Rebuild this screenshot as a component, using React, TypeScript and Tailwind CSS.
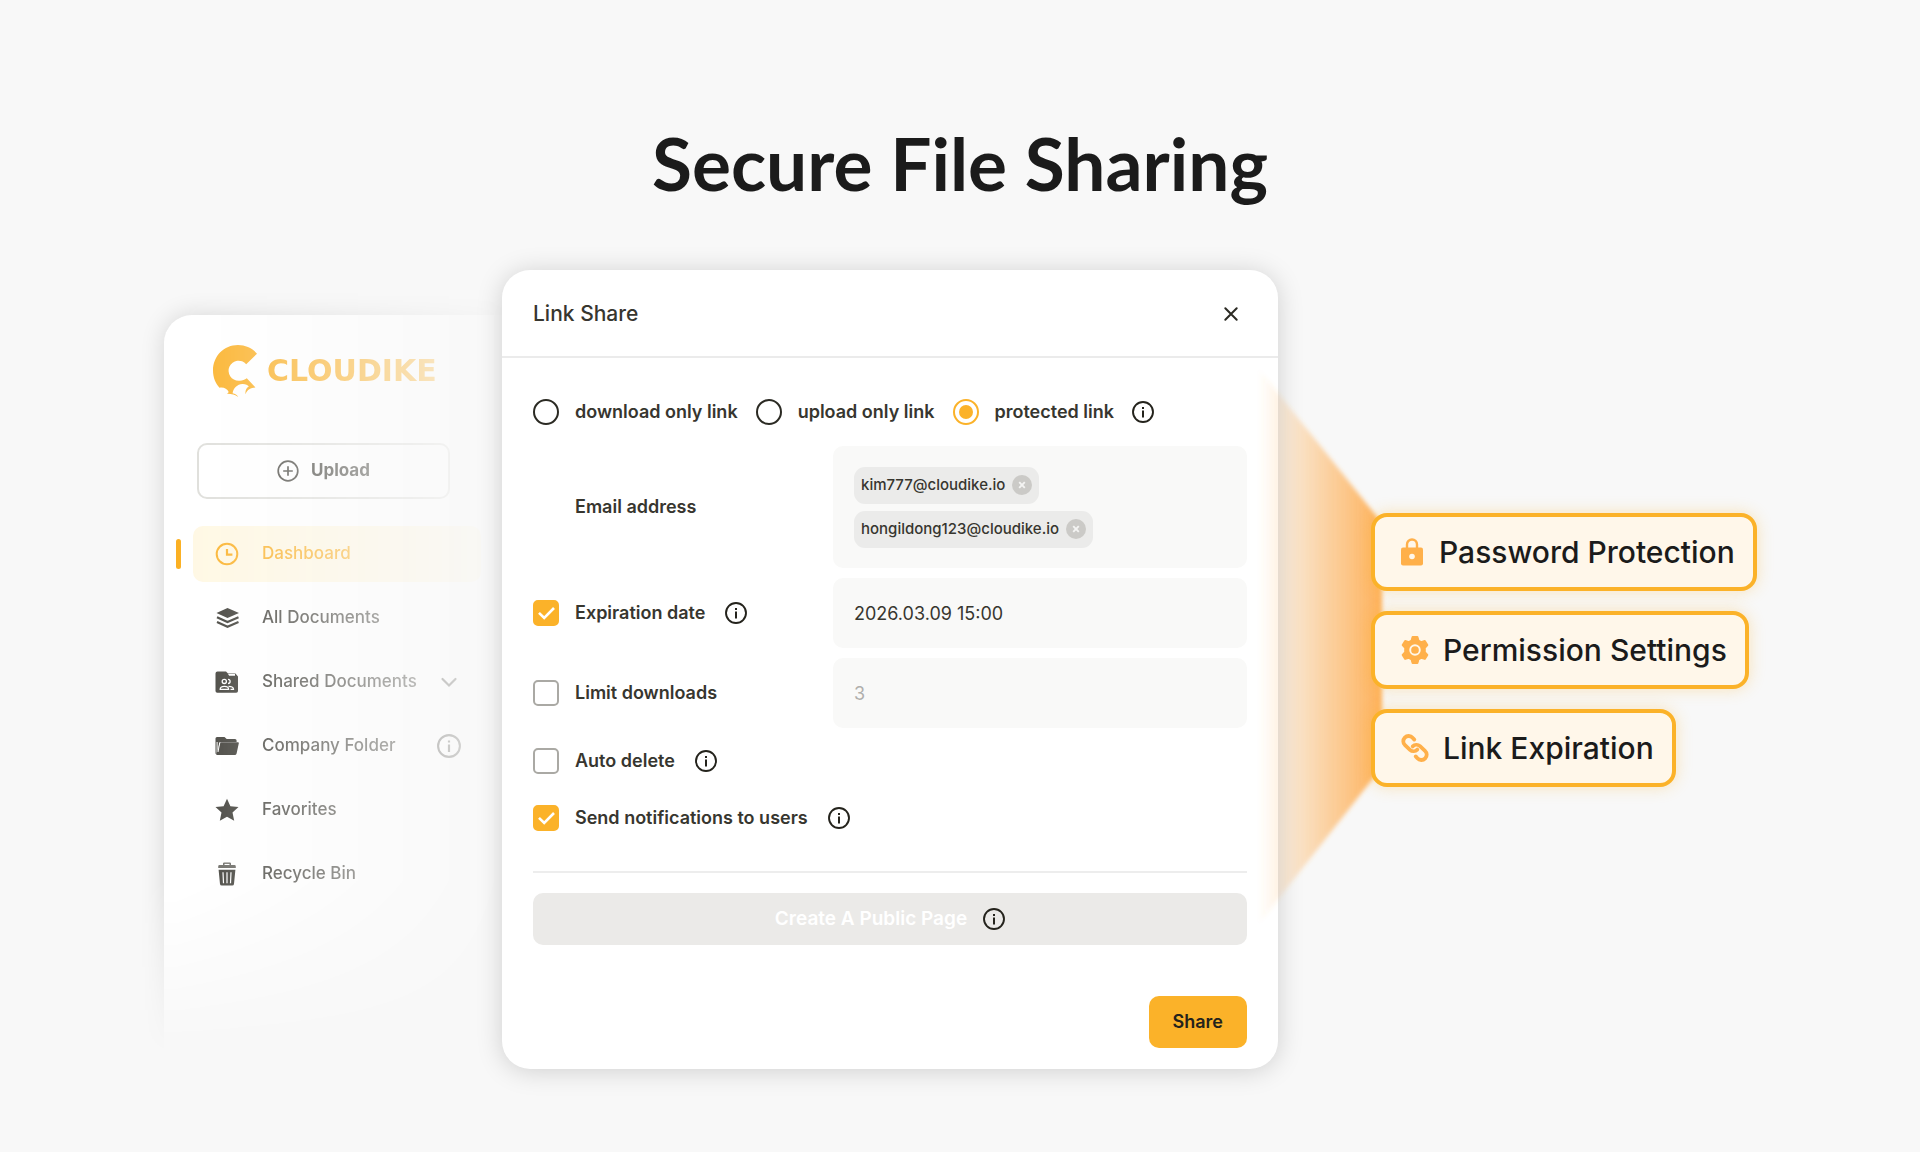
import type { ReactNode } from "react";

function InfoIcon({ className }: { className?: string }) {
  return (
    <svg viewBox="0 0 22 22" className={className} fill="none" aria-hidden="true">
      <circle cx="11" cy="11" r="10" stroke="currentColor" strokeWidth="1.9" />
      <path d="M10 5.9h2v2h-2zM10 9.6h2v6.8h-2z" fill="currentColor" />
    </svg>
  );
}

function InfoButton({ topic }: { topic: string }) {
  return (
    <button type="button" aria-label={`About ${topic}`} className="size-[22px] shrink-0 text-[#24231c]">
      <InfoIcon className="size-full" />
    </button>
  );
}

function LogoMark() {
  return (
    <svg viewBox="0 0 44 52" className="h-[52px] w-11 shrink-0" fill="#fbb22a" aria-hidden="true">
      <path d="M44 8.700C39.400 3.200 32.600 0 25 0 11 0 0 11 0 25.500c0 7 2.600 13 6.500 17.200 3.900-.8 7.600.8 9.200 4.300-.5.9-1 1.400-1.800 1.800 4.300-.1 8.300.8 11.300 3.200-1.200-2-3-3.200-5.600-3.700.8-5.200 4.800-8.900 9.600-9.200 2.800-.2 5.600.7 6.600 2.500-2.500 1.300-3.800 4.300-3.300 7.600 1.800-4.400 5.200-6.500 10-6.600L33.800 33.300c-2.400 1.900-5.200 2.700-8.100 2.400a10 10 0 1 1 7.500-16.500z" />
    </svg>
  );
}

const ClockIcon = (
  <svg viewBox="0 0 24 24" className="size-6" fill="none" aria-hidden="true">
    <circle cx="12" cy="12" r="10.300" stroke="#fbb22a" strokeWidth="2" />
    <path d="M12 7v5.600h5.400" stroke="#fbb22a" strokeWidth="2.200" />
  </svg>
);

const LayersIcon = (
  <svg viewBox="0 0 24 24" className="size-6" aria-hidden="true">
    <path d="M12.500 2 24 7l-11.500 5L1.500 7z" fill="#3f3e38" />
    <path d="M2 11.300 12.500 16 23.500 11.300M2 16 12.500 20.700 23.500 16" fill="none" stroke="#3f3e38" strokeWidth="2.200" />
  </svg>
);

const SharedFolderIcon = (
  <svg viewBox="0 0 24 24" className="size-6" aria-hidden="true">
    <path d="M2.500 1.500H11l2 2h7.500L23 6.500V21a1.800 1.800 0 0 1-1.800 1.800H2.300A1.800 1.800 0 0 1 .5 21V3.500a2 2 0 0 1 2-2z" fill="#3f3e38" />
    <path d="M13 4h7v1.800h-5.800z" fill="#fff" />
    <g fill="none" stroke="#fff" strokeWidth="1.300">
      <circle cx="9.300" cy="11.400" r="2.100" />
      <path d="M13 9.300a2.100 2.100 0 1 1 0 4.200" />
      <path d="M5.200 19.300c0-2 1.800-3 4.200-3s4.200 1 4.200 3z" />
      <path d="M13.500 16.300c2.800 0 5 .8 5 3h-3" />
    </g>
  </svg>
);

const FolderIcon = (
  <svg viewBox="0 0 24 24" className="size-6" aria-hidden="true">
    <path d="M2 3h7.500l2.200 2H20a1.600 1.600 0 0 1 1.600 1.600V8H6.300a2 2 0 0 0-2 1.500L2.600 18V8h-1v12.500L.8 20A1.500 1.500 0 0 1 .5 19V4.500A1.500 1.500 0 0 1 2 3z" fill="#3f3e38" />
    <path d="M5.500 8.300H23a.8.8 0 0 1 .8 1l-2.200 10.200a2 2 0 0 1-2 1.500H2.200a1 1 0 0 1-.9-1.200z" fill="#3f3e38" />
    <path d="M3 18 4.800 8.300" stroke="#fff" strokeWidth="1" />
  </svg>
);

const StarIcon = (
  <svg viewBox="0 0 24 24" className="size-6" aria-hidden="true">
    <path d="m12 .8 3.400 7.400 8.100.9-6 5.500 1.700 8.100L12 18.800l-7.200 3.900 1.700-8.100-6-5.500 8.100-.9z" fill="#3f3e38" />
  </svg>
);

const TrashIcon = (
  <svg viewBox="0 0 24 24" className="size-6" aria-hidden="true">
    <path d="M8 3V1.600A1.200 1.200 0 0 1 9.200.4h5.600A1.200 1.200 0 0 1 16 1.600V3h3.400a1.400 1.400 0 0 1 1.400 1.400V6H3.200V4.400A1.400 1.400 0 0 1 4.600 3z" fill="#66655f" />
    <path d="M9.500 3V1.900h5V3z" fill="#fff" />
    <path d="M3.600 7.800h16.800L19 22a1.800 1.800 0 0 1-1.800 1.600H6.800A1.800 1.800 0 0 1 5 22z" fill="#3f3e38" />
    <path d="M8 10.200l.5 11M12 10.200v11M16 10.200l-.5 11" stroke="#fff" strokeWidth="1.200" />
  </svg>
);

const navItems: { label: string; icon: ReactNode; active?: boolean; extra?: ReactNode }[] = [
  { label: "Dashboard", icon: ClockIcon, active: true },
  { label: "All Documents", icon: LayersIcon },
  {
    label: "Shared Documents",
    icon: SharedFolderIcon,
    extra: (
      <svg viewBox="0 0 24 24" className="size-6" fill="none" stroke="currentColor" strokeWidth="2.200" strokeLinecap="round" aria-hidden="true">
        <path d="m5.500 9 6.500 6.500L18.500 9" />
      </svg>
    ),
  },
  { label: "Company Folder", icon: FolderIcon, extra: <InfoIcon className="size-6" /> },
  { label: "Favorites", icon: StarIcon },
  { label: "Recycle Bin", icon: TrashIcon },
];

function Sidebar() {
  return (
    <div className="-ml-8 mt-[13px] h-[786px] pl-8 pt-8 [mask-composite:intersect] [mask-image:linear-gradient(to_right,black_12%,rgba(0,0,0,0.1)_100%),linear-gradient(to_bottom,black_76%,transparent_98%)]">
      <aside className="h-full rounded-tl-[28px] bg-white pl-3 pt-[30px] shadow-[0_0_24px_rgba(0,0,0,0.14)]">
        <div className="ml-[37px] flex items-center gap-[10px]">
          <LogoMark />
          <span className="font-['DejaVu_Sans',sans-serif] text-[30px] font-bold leading-8 text-[#fbb22a]">CLOUDIKE</span>
        </div>
        <button
          type="button"
          className="ml-[21px] mt-[46px] flex h-14 w-[253px] items-center justify-center gap-3 rounded-[10px] border-2 border-[#dededa] text-[17px] font-bold text-[#4a4943]"
        >
          <svg viewBox="0 0 22 22" className="size-[22px]" fill="none" stroke="currentColor" strokeWidth="1.700" aria-hidden="true">
            <circle cx="11" cy="11" r="9.800" />
            <path d="M11 6.200v9.600M6.200 11h9.600" />
          </svg>
          Upload
        </button>
        <nav className="mt-[27px] flex flex-col gap-2">
          {navItems.map((item) => (
            <div key={item.label} className="flex items-center gap-3">
              <span className={item.active ? "h-[30px] w-[5px] rounded-full bg-[#fbb022]" : "h-[30px] w-[5px]"} />
              <a
                href="#"
                className={
                  item.active
                    ? "mr-[21px] flex h-14 flex-1 items-center rounded-[10px] bg-[#fff8e3] pl-[22px] pr-5 text-[17px] font-medium text-[#fbb22a]"
                    : "mr-[21px] flex h-14 flex-1 items-center whitespace-nowrap rounded-[10px] pl-[22px] pr-5 text-[17px] font-medium text-[#44433d]"
                }
              >
                <span className="mr-[23px] shrink-0">{item.icon}</span>
                <span className="flex-1">{item.label}</span>
                {item.extra}
              </a>
            </div>
          ))}
        </nav>
      </aside>
    </div>
  );
}

function LinkTypeOption({ label, checked }: { label: string; checked?: boolean }) {
  return (
    <label className="flex items-center gap-4">
      <input
        type="radio"
        name="link-type"
        defaultChecked={checked}
        className="grid size-[26px] appearance-none place-content-center rounded-full border-2 border-[#2b2a23] before:size-[14px] before:rounded-full checked:border-[#fbb229] checked:before:bg-[#fbb229]"
      />
      {label}
    </label>
  );
}

function CheckOption({ label, checked, info }: { label: string; checked?: boolean; info?: boolean }) {
  return (
    <div className="flex items-center gap-5">
      <label className="flex items-center gap-4">
        <span className="relative size-[26px]">
          <input
            type="checkbox"
            defaultChecked={checked}
            className="peer block size-[26px] appearance-none rounded-[5px] border-2 border-[#aaa9a4] checked:border-[#fbb229] checked:bg-[#fbb229]"
          />
          <svg
            viewBox="0 0 26 26"
            className="pointer-events-none absolute inset-0 hidden size-[26px] peer-checked:block"
            fill="none"
            stroke="#fff"
            strokeWidth="2.600"
            aria-hidden="true"
          >
            <path d="m6 12.800 5.200 5.200L21 8" />
          </svg>
        </span>
        {label}
      </label>
      {info && <InfoButton topic={label} />}
    </div>
  );
}

function EmailChip({ email }: { email: string }) {
  return (
    <li className="flex h-[37px] items-center gap-[7px] rounded-[11px] bg-[#ebebea] px-[7px] text-[15px] font-medium">
      {email}
      <button type="button" aria-label={`Remove ${email}`} className="size-5 rounded-full bg-[#cbcac7]">
        <svg viewBox="0 0 20 20" className="size-5" stroke="#f4f4f3" strokeWidth="1.900" aria-hidden="true">
          <path d="m7.200 7.200 5.600 5.600M12.800 7.200l-5.600 5.600" />
        </svg>
      </button>
    </li>
  );
}

function LinkShareDialog() {
  return (
    <section
      role="dialog"
      aria-labelledby="dialog-title"
      className="relative rounded-[28px] bg-white text-[18px] font-semibold leading-6 text-[#37362f] shadow-[0_2px_26px_rgba(0,0,0,0.17)]"
    >
      <header className="flex h-[88px] items-center justify-between border-b-2 border-[#ebebeb] pl-[31px] pr-[35px] pt-0.5">
        <h2 id="dialog-title" className="text-[21px] font-medium leading-7">
          Link Share
        </h2>
        <button type="button" aria-label="Close" className="size-6">
          <svg viewBox="0 0 24 24" className="size-6" stroke="#2b2a23" strokeWidth="2" strokeLinecap="round" aria-hidden="true">
            <path d="m6.300 6.300 11.400 11.400M17.700 6.300 6.300 17.700" />
          </svg>
        </button>
      </header>

      <form className="px-[31px] pb-[21px] pt-[41px]" onSubmit={(event) => event.preventDefault()}>
        <div className="flex items-center gap-[18px]" role="radiogroup" aria-label="Link type">
          <LinkTypeOption label="download only link" />
          <LinkTypeOption label="upload only link" />
          <LinkTypeOption label="protected link" checked />
          <InfoButton topic="link types" />
        </div>

        <div className="mt-[21px] grid grid-cols-[300px_1fr] items-center gap-y-[10px]">
          <span id="email-label" className="pl-[42px]">
            Email address
          </span>
          <ul
            aria-labelledby="email-label"
            className="flex h-[122px] flex-col items-start justify-center gap-[7px] rounded-[10px] bg-[#f9f9f8] px-[21px]"
          >
            <EmailChip email="kim777@cloudike.io" />
            <EmailChip email="hongildong123@cloudike.io" />
          </ul>

          <CheckOption label="Expiration date" checked info />
          <input
            type="text"
            aria-label="Expiration date and time"
            defaultValue="2026.03.09 15:00"
            className="h-[70px] w-full rounded-[10px] bg-[#f9f9f8] px-[21px] font-normal"
          />

          <CheckOption label="Limit downloads" />
          <input
            type="text"
            aria-label="Number of downloads"
            placeholder="3"
            className="h-[70px] w-full rounded-[10px] bg-[#f9f9f8] px-[21px] font-normal placeholder:text-[#b0afac]"
          />
        </div>

        <div className="mt-5 flex flex-col gap-[31px]">
          <CheckOption label="Auto delete" info />
          <CheckOption label="Send notifications to users" checked info />
        </div>

        <hr className="mt-10 border-t-2 border-[#ededed]" />

        <button
          type="button"
          className="mt-5 flex h-[52px] w-full items-center justify-center gap-4 rounded-[10px] bg-[#ebeae8] text-[19px] text-white"
        >
          Create A Public Page
          <InfoIcon className="size-[22px] text-[#24231c]" />
        </button>

        <div className="mt-[51px] flex justify-end">
          <button type="submit" className="h-[52px] rounded-[10px] bg-[#fbb229] px-6 text-[#24231c]">
            Share
          </button>
        </div>
      </form>
    </section>
  );
}

function Beam() {
  return (
    <svg
      viewBox="0 0 140 580"
      className="pointer-events-none absolute -left-6 top-[86px] h-[580px] w-[140px]"
      aria-hidden="true"
    >
      <defs>
        <linearGradient id="beam-fill" gradientUnits="userSpaceOnUse" x1="4" y1="0" x2="128" y2="0">
          <stop offset="0" stopColor="#ffa53f" stopOpacity="0" />
          <stop offset="0.2" stopColor="#ffa53f" stopOpacity="0.16" />
          <stop offset="1" stopColor="#ffa53f" stopOpacity="0.85" />
        </linearGradient>
        <filter id="beam-blur" x="-10%" y="-10%" width="120%" height="120%">
          <feGaussianBlur stdDeviation="2" />
        </filter>
      </defs>
      <path d="M4 12 128 167v244L4 569z" fill="url(#beam-fill)" filter="url(#beam-blur)" />
    </svg>
  );
}

const LockIcon = (
  <svg viewBox="0 0 22 28" className="mr-0.5 h-7 w-[22px]" aria-hidden="true">
    <path d="M6 10V6.500a5 5 0 0 1 10 0V10" fill="none" stroke="#ffb04a" strokeWidth="2.400" />
    <rect y="9.400" width="22" height="18.200" rx="2" fill="#ffb04a" />
    <circle cx="11" cy="18.500" r="2.800" fill="#fff7ea" />
  </svg>
);

const GearIcon = (
  <svg viewBox="0 0 28 28" className="size-7" aria-hidden="true">
    <path
      d="M11.600 1h4.800l1 3.600 2.700 1.500 3.700-1.100 2.500 4-2.500 2.800v4.400l2.500 2.700-2.500 4-3.700-1-2.700 1.500-1 3.600h-4.800l-1-3.600-2.700-1.500-3.700 1-2.500-4 2.500-2.700v-4.400L1.700 9l2.500-4 3.700 1.100 2.700-1.500z"
      fill="#ffb04a"
      stroke="#ffb04a"
      strokeWidth="2"
      strokeLinejoin="round"
    />
    <circle cx="14" cy="14" r="4.800" fill="#ffb04a" stroke="#fff7ea" strokeWidth="1.900" />
  </svg>
);

const LinkIcon = (
  <svg viewBox="0 0 28 28" className="size-7" fill="none" stroke="#ffb04a" strokeWidth="3.800" strokeLinecap="round" aria-hidden="true">
    <path d="M13.300 5.600 11.600 3.800A5.300 5.300 0 0 0 3.800 3.600a5.300 5.300 0 0 0 .2 7.600l5 4.600a5.300 5.300 0 0 0 7.300-.2" />
    <path d="m14.700 22.400 1.700 1.800a5.300 5.300 0 0 0 7.800.2 5.300 5.300 0 0 0-.2-7.600l-5-4.600a5.300 5.300 0 0 0-7.300.2" />
  </svg>
);

const features = [
  { label: "Password Protection", icon: LockIcon },
  { label: "Permission Settings", icon: GearIcon },
  { label: "Link Expiration", icon: LinkIcon },
];

export default function App() {
  return (
    <main className="min-h-screen bg-[#f8f8f8] px-[164px] pb-20 pt-[123px] font-['Inter',sans-serif]">
      <h1 className="text-center font-['Lato',sans-serif] text-[73px] font-bold leading-[80px] text-[#1b1b1b]">
        Secure File Sharing
      </h1>
      <div className="mt-[67px] grid grid-cols-[minmax(0,338fr)_minmax(0,776fr)_minmax(0,478fr)] items-start">
        <Sidebar />
        <LinkShareDialog />
        <div className="relative pl-[93px] pt-[243px]">
          <Beam />
          <ul className="relative flex flex-col items-start gap-5">
            {features.map((feature) => (
              <li
                key={feature.label}
                className="flex h-[78px] items-center gap-[14px] whitespace-nowrap rounded-2xl border-4 border-[#fbb229] bg-[#fff7ea] pl-[26px] pr-[18px] text-[30px] font-medium text-[#1b1b1b] shadow-[0_0_16px_rgba(251,178,41,0.3)]"
              >
                {feature.icon}
                {feature.label}
              </li>
            ))}
          </ul>
        </div>
      </div>
    </main>
  );
}
